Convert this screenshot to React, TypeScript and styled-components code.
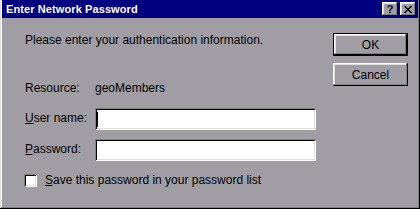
import React from 'react';
import styled, { createGlobalStyle } from 'styled-components';

const GlobalStyle = createGlobalStyle`
  html, body {
    margin: 0;
    padding: 0;
    background: #a09ea4;
  }
  body {
    font-family: "Liberation Sans", Arial, sans-serif;
    font-size: 12px;
    color: #000;
  }
`;

const Window = styled.div`
  width: 420px;
  height: 209px;
  box-sizing: border-box;
  background: #a09ea4;
  padding: 0 2px 2px 2px;
  box-shadow: inset -1px -1px #000, inset 1px 0 #dfdfdf, inset -2px -2px #808080, inset 2px 0 #fff;
  display: flex;
  flex-direction: column;
`;

const TitleBar = styled.div`
  height: 18px;
  background: #000080;
  display: flex;
  align-items: center;
  justify-content: space-between;
  padding: 0 2px 0 4px;
`;

const Title = styled.span`
  color: #fff;
  font-weight: bold;
  font-size: 11px;
  letter-spacing: 0.1px;
`;

const TitleButtons = styled.div`
  display: flex;
  gap: 2px;
`;

const TitleButton = styled.div`
  width: 16px;
  height: 14px;
  box-sizing: border-box;
  background: #a09ea4;
  box-shadow: inset -1px -1px #000, inset 1px 1px #fff, inset -2px -2px #808080, inset 2px 2px #dfdfdf;
  display: flex;
  align-items: center;
  justify-content: center;
  font-weight: bold;
  font-size: 11px;
  line-height: 14px;
`;

const Body = styled.div`
  flex: 1;
  display: flex;
  padding: 15px 10px 0 23px;
`;

const Main = styled.div`
  flex: 1;
  display: flex;
  flex-direction: column;
`;

const Text = styled.div<{ $top?: number }>`
  line-height: 14px;
  margin-top: ${p => p.$top ?? 0}px;
  white-space: nowrap;
`;

const FieldRow = styled.div<{ $top: number }>`
  display: grid;
  grid-template-columns: 70px 221px;
  align-items: center;
  margin-top: ${p => p.$top}px;
  line-height: 14px;
`;

const Label = styled.span`
  padding-bottom: 3px;
`;

const Field = styled.div`
  height: 22px;
  box-sizing: border-box;
  background: #fff;
  box-shadow: inset 1px 1px #808080, inset -1px -1px #fff, inset 2px 2px #000, inset -2px -2px #dfdfdf;
  display: flex;
  align-items: center;
  padding-left: 2px;
`;

const Caret = styled.span`
  width: 1px;
  height: 15px;
  background: #000;
`;

const CheckRow = styled.label`
  display: flex;
  align-items: center;
  gap: 8px;
  margin-top: 12px;
  margin-left: -1px;
  line-height: 14px;
`;

const Box = styled.span`
  width: 13px;
  height: 13px;
  box-sizing: border-box;
  background: #fff;
  box-shadow: inset 1px 1px #808080, inset -1px -1px #fff, inset 2px 2px #000, inset -2px -2px #dfdfdf;
`;

const Side = styled.div`
  display: flex;
  flex-direction: column;
  gap: 7px;
`;

const Button = styled.div<{ $default?: boolean }>`
  width: 75px;
  height: 23px;
  box-sizing: border-box;
  display: flex;
  align-items: center;
  justify-content: center;
  background: #a09ea4;
  box-shadow: ${p =>
    p.$default
      ? 'inset 0 0 0 1px #000, inset -2px -2px #000, inset 2px 2px #fff, inset -3px -3px #808080, inset 3px 3px #dfdfdf'
      : 'inset -1px -1px #000, inset 1px 1px #fff, inset -2px -2px #808080, inset 2px 2px #dfdfdf'};
`;

export default function App() {
  return (
    <>
      <GlobalStyle />
      <Window>
        <TitleBar>
          <Title>Enter Network Password</Title>
          <TitleButtons>
            <TitleButton>?</TitleButton>
            <TitleButton>
              <svg width="8" height="7" viewBox="0 0 8 7" shapeRendering="crispEdges">
                <path d="M0 0h2v1H0zM6 0h2v1H6zM1 1h2v1H1zM5 1h2v1H5zM2 2h4v1H2zM3 3h2v1H3zM2 4h4v1H2zM1 5h2v1H1zM5 5h2v1H5zM0 6h2v1H0zM6 6h2v1H6z" fill="#000" />
              </svg>
            </TitleButton>
          </TitleButtons>
        </TitleBar>
        <Body>
          <Main>
            <Text>Please enter your authentication information.</Text>
            <FieldRow $top={34}>
              <span>Resource:</span>
              <span>geoMembers</span>
            </FieldRow>
            <FieldRow $top={13}>
              <Label><u>U</u>ser name:</Label>
              <Field><Caret /></Field>
            </FieldRow>
            <FieldRow $top={9}>
              <Label><u>P</u>assword:</Label>
              <Field />
            </FieldRow>
            <CheckRow>
              <Box />
              <span><u>S</u>ave this password in your password list</span>
            </CheckRow>
          </Main>
          <Side>
            <Button $default>OK</Button>
            <Button>Cancel</Button>
          </Side>
        </Body>
      </Window>
    </>
  );
}
